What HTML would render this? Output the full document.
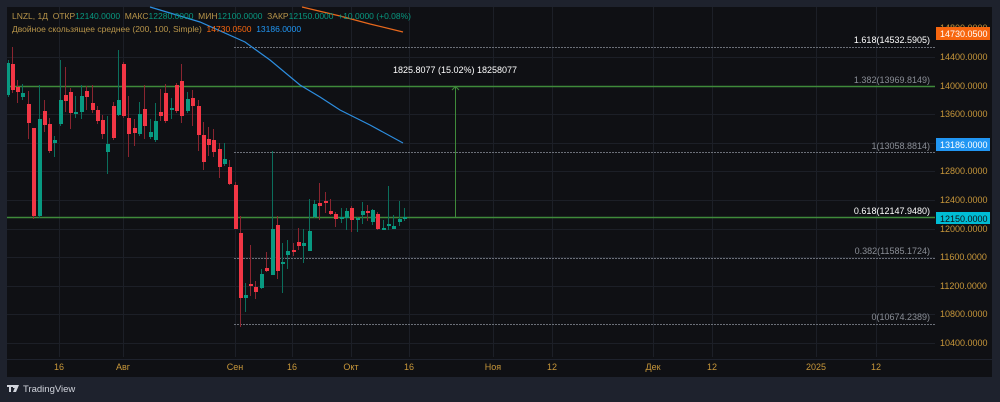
<!DOCTYPE html>
<html><head><meta charset="utf-8"><style>
html,body{margin:0;padding:0;background:#1e222d;width:1000px;height:402px;overflow:hidden}
svg{display:block}
text{font-family:"Liberation Sans",sans-serif}
</style></head><body>
<svg width="1000" height="402" viewBox="0 0 1000 402" xmlns="http://www.w3.org/2000/svg">
<rect x="0" y="0" width="1000" height="402" fill="#1e222d"/>
<rect x="7" y="7" width="985" height="370" fill="#0f1014"/>
<g stroke="#1c1f27" stroke-width="1">
<line x1="7" y1="57.5" x2="935" y2="57.5"/><line x1="7" y1="114.5" x2="935" y2="114.5"/>
<line x1="7" y1="171.5" x2="935" y2="171.5"/><line x1="7" y1="200.5" x2="935" y2="200.5"/>
<line x1="7" y1="229.5" x2="935" y2="229.5"/><line x1="7" y1="286.5" x2="935" y2="286.5"/>
<line x1="7" y1="314.5" x2="935" y2="314.5"/><line x1="7" y1="343.5" x2="935" y2="343.5"/>
<line x1="7" y1="143.5" x2="935" y2="143.5"/><line x1="7" y1="257.5" x2="935" y2="257.5"/>
<line x1="59.5" y1="7" x2="59.5" y2="357"/><line x1="123.5" y1="7" x2="123.5" y2="357"/>
<line x1="235.5" y1="7" x2="235.5" y2="357"/><line x1="292.5" y1="7" x2="292.5" y2="357"/>
<line x1="351.5" y1="7" x2="351.5" y2="357"/><line x1="409.5" y1="7" x2="409.5" y2="357"/>
<line x1="493.5" y1="7" x2="493.5" y2="357"/><line x1="552.5" y1="7" x2="552.5" y2="357"/>
<line x1="653.5" y1="7" x2="653.5" y2="357"/><line x1="712.5" y1="7" x2="712.5" y2="357"/>
<line x1="816.5" y1="7" x2="816.5" y2="357"/><line x1="876.5" y1="7" x2="876.5" y2="357"/>
</g>
<line x1="7" y1="359.5" x2="992" y2="359.5" stroke="#1e222d"/>
<g stroke="#6b6f78" stroke-width="1" stroke-dasharray="2,1">
<line x1="234" y1="47.5" x2="935" y2="47.5"/>
<line x1="234" y1="152.5" x2="935" y2="152.5"/>
<line x1="234" y1="258.5" x2="935" y2="258.5"/>
<line x1="234" y1="324.5" x2="935" y2="324.5"/>
</g>
<line x1="7" y1="86.5" x2="935" y2="86.5" stroke="#3f8a3a" stroke-width="1.5"/>
<line x1="7" y1="217.5" x2="935" y2="217.5" stroke="#3f8a3a" stroke-width="1.5"/>
<line x1="455.5" y1="87" x2="455.5" y2="217" stroke="#3f8a3a"/>
<path d="M452 90 L455.5 86.5 L459 90" stroke="#3f8a3a" fill="none"/>
<text x="455" y="73" fill="#fff" font-size="9" text-anchor="middle">1825.8077 (15.02%) 18258077</text>
<g font-size="9" text-anchor="end">
<text x="930" y="43" fill="#fff">1.618(14532.5905)</text>
<text x="930" y="83" fill="#8a8e96">1.382(13969.8149)</text>
<text x="930" y="149" fill="#8a8e96">1(13058.8814)</text>
<text x="930" y="214" fill="#fff">0.618(12147.9480)</text>
<text x="930" y="254" fill="#8a8e96">0.382(11585.1724)</text>
<text x="930" y="320" fill="#8a8e96">0(10674.2389)</text>
</g>
<polyline points="150,7 200,22 245,42 270,60 300,85 320,97 340,110 370,125 403,143" fill="none" stroke="#2d8ee0" stroke-width="1.2"/>
<polyline points="302,7 340,16 370,24 403,32" fill="none" stroke="#e8681c" stroke-width="1.2"/>
<g stroke-width="1">
<line x1="8.5" y1="60" x2="8.5" y2="97" stroke="#0b6e5c"/><rect x="7" y="63" width="3" height="32" fill="#089981"/>
<line x1="12.5" y1="47" x2="12.5" y2="93" stroke="#8a2530"/><rect x="11" y="64" width="4" height="26" fill="#f23645"/>
<line x1="17.5" y1="80" x2="17.5" y2="103" stroke="#8a2530"/><rect x="16" y="87" width="4" height="5" fill="#f23645"/>
<line x1="22.5" y1="84" x2="22.5" y2="100" stroke="#0b6e5c"/><rect x="21" y="93" width="4" height="4" fill="#089981"/>
<line x1="28.5" y1="91" x2="28.5" y2="139" stroke="#8a2530"/><rect x="27" y="104" width="4" height="19" fill="#f23645"/>
<line x1="33.5" y1="128" x2="33.5" y2="219" stroke="#8a2530"/><rect x="32" y="128" width="4" height="88" fill="#f23645"/>
<line x1="39.5" y1="85" x2="39.5" y2="218" stroke="#0b6e5c"/><rect x="38" y="119" width="4" height="97" fill="#089981"/>
<line x1="44.5" y1="100" x2="44.5" y2="132" stroke="#8a2530"/><rect x="43" y="111" width="4" height="14" fill="#f23645"/>
<line x1="49.5" y1="118" x2="49.5" y2="153" stroke="#8a2530"/><rect x="48" y="124" width="4" height="27" fill="#f23645"/>
<line x1="54.5" y1="136" x2="54.5" y2="157" stroke="#0b6e5c"/><rect x="53" y="140" width="4" height="3" fill="#089981"/>
<line x1="60.5" y1="60" x2="60.5" y2="126" stroke="#0b6e5c"/><rect x="59" y="100" width="4" height="24" fill="#089981"/>
<line x1="65.5" y1="67" x2="65.5" y2="112" stroke="#8a2530"/><rect x="64" y="95" width="4" height="6" fill="#f23645"/>
<line x1="70.5" y1="88" x2="70.5" y2="129" stroke="#8a2530"/><rect x="69" y="92" width="4" height="21" fill="#f23645"/>
<line x1="75.5" y1="96" x2="75.5" y2="118" stroke="#0b6e5c"/><rect x="74" y="112" width="4" height="2" fill="#089981"/>
<line x1="81.5" y1="85" x2="81.5" y2="119" stroke="#0b6e5c"/><rect x="80" y="96" width="4" height="16" fill="#089981"/>
<line x1="86.5" y1="86" x2="86.5" y2="110" stroke="#8a2530"/><rect x="85" y="91" width="4" height="6" fill="#f23645"/>
<line x1="92.5" y1="85" x2="92.5" y2="113" stroke="#8a2530"/><rect x="91" y="103" width="4" height="7" fill="#f23645"/>
<line x1="97.5" y1="106" x2="97.5" y2="124" stroke="#8a2530"/><rect x="96" y="110" width="4" height="11" fill="#f23645"/>
<line x1="102.5" y1="115" x2="102.5" y2="139" stroke="#8a2530"/><rect x="101" y="120" width="4" height="14" fill="#f23645"/>
<line x1="107.5" y1="116" x2="107.5" y2="174" stroke="#0b6e5c"/><rect x="106" y="144" width="4" height="8" fill="#089981"/>
<line x1="113.5" y1="102" x2="113.5" y2="140" stroke="#8a2530"/><rect x="112" y="106" width="4" height="32" fill="#f23645"/>
<line x1="118.5" y1="50" x2="118.5" y2="116" stroke="#0b6e5c"/><rect x="117" y="100" width="4" height="15" fill="#089981"/>
<line x1="123.5" y1="62" x2="123.5" y2="118" stroke="#8a2530"/><rect x="122" y="64" width="4" height="52" fill="#f23645"/>
<line x1="128.5" y1="96" x2="128.5" y2="157" stroke="#8a2530"/><rect x="127" y="118" width="4" height="16" fill="#f23645"/>
<line x1="134.5" y1="119" x2="134.5" y2="146" stroke="#8a2530"/><rect x="133" y="128" width="4" height="5" fill="#f23645"/>
<line x1="139.5" y1="102" x2="139.5" y2="136" stroke="#0b6e5c"/><rect x="138" y="114" width="4" height="20" fill="#089981"/>
<line x1="144.5" y1="85" x2="144.5" y2="139" stroke="#8a2530"/><rect x="143" y="109" width="4" height="17" fill="#f23645"/>
<line x1="150.5" y1="119" x2="150.5" y2="139" stroke="#0b6e5c"/><rect x="149" y="132" width="4" height="5" fill="#089981"/>
<line x1="155.5" y1="103" x2="155.5" y2="142" stroke="#0b6e5c"/><rect x="154" y="121" width="4" height="19" fill="#089981"/>
<line x1="160.5" y1="89" x2="160.5" y2="121" stroke="#8a2530"/><rect x="159" y="112" width="4" height="4" fill="#f23645"/>
<line x1="165.5" y1="84" x2="165.5" y2="123" stroke="#8a2530"/><rect x="164" y="93" width="4" height="28" fill="#f23645"/>
<line x1="171.5" y1="98" x2="171.5" y2="119" stroke="#0b6e5c"/><rect x="170" y="108" width="4" height="2" fill="#089981"/>
<line x1="176.5" y1="83" x2="176.5" y2="113" stroke="#8a2530"/><rect x="175" y="85" width="4" height="26" fill="#f23645"/>
<line x1="181.5" y1="64" x2="181.5" y2="123" stroke="#8a2530"/><rect x="180" y="81" width="4" height="35" fill="#f23645"/>
<line x1="187.5" y1="92" x2="187.5" y2="113" stroke="#0b6e5c"/><rect x="186" y="99" width="4" height="12" fill="#089981"/>
<line x1="192.5" y1="90" x2="192.5" y2="126" stroke="#8a2530"/><rect x="191" y="98" width="4" height="8" fill="#f23645"/>
<line x1="198.5" y1="100" x2="198.5" y2="151" stroke="#8a2530"/><rect x="197" y="106" width="4" height="29" fill="#f23645"/>
<line x1="203.5" y1="122" x2="203.5" y2="170" stroke="#8a2530"/><rect x="202" y="135" width="4" height="27" fill="#f23645"/>
<line x1="208.5" y1="127" x2="208.5" y2="156" stroke="#8a2530"/><rect x="207" y="139" width="4" height="6" fill="#f23645"/>
<line x1="213.5" y1="129" x2="213.5" y2="157" stroke="#8a2530"/><rect x="212" y="140" width="4" height="12" fill="#f23645"/>
<line x1="219.5" y1="143" x2="219.5" y2="178" stroke="#8a2530"/><rect x="218" y="149" width="4" height="18" fill="#f23645"/>
<line x1="224.5" y1="143" x2="224.5" y2="166" stroke="#0b6e5c"/><rect x="223" y="159" width="4" height="5" fill="#089981"/>
<line x1="229.5" y1="160" x2="229.5" y2="185" stroke="#8a2530"/><rect x="228" y="167" width="4" height="17" fill="#f23645"/>
<line x1="235.5" y1="182" x2="235.5" y2="229" stroke="#8a2530"/><rect x="234" y="185" width="4" height="44" fill="#f23645"/>
<line x1="240.5" y1="216" x2="240.5" y2="327" stroke="#8a2530"/><rect x="239" y="233" width="4" height="65" fill="#f23645"/>
<line x1="245.5" y1="283" x2="245.5" y2="312" stroke="#0b6e5c"/><rect x="244" y="295" width="4" height="3" fill="#089981"/>
<line x1="250.5" y1="245" x2="250.5" y2="296" stroke="#8a2530"/><rect x="249" y="284" width="4" height="2" fill="#f23645"/>
<line x1="255.5" y1="281" x2="255.5" y2="299" stroke="#8a2530"/><rect x="254" y="287" width="4" height="5" fill="#f23645"/>
<line x1="261.5" y1="269" x2="261.5" y2="289" stroke="#0b6e5c"/><rect x="260" y="274" width="4" height="14" fill="#089981"/>
<line x1="266.5" y1="252" x2="266.5" y2="272" stroke="#8a2530"/><rect x="265" y="268" width="4" height="3" fill="#f23645"/>
<line x1="272.5" y1="151" x2="272.5" y2="275" stroke="#0b6e5c"/><rect x="271" y="229" width="4" height="46" fill="#089981"/>
<line x1="277.5" y1="216" x2="277.5" y2="279" stroke="#8a2530"/><rect x="276" y="225" width="4" height="46" fill="#f23645"/>
<line x1="282.5" y1="243" x2="282.5" y2="293" stroke="#0b6e5c"/><rect x="281" y="262" width="4" height="2" fill="#089981"/>
<line x1="287.5" y1="240" x2="287.5" y2="269" stroke="#0b6e5c"/><rect x="286" y="251" width="4" height="4" fill="#089981"/>
<line x1="293.5" y1="243" x2="293.5" y2="256" stroke="#8a2530"/><rect x="292" y="250" width="4" height="2" fill="#f23645"/>
<line x1="298.5" y1="228" x2="298.5" y2="250" stroke="#8a2530"/><rect x="297" y="242" width="4" height="4" fill="#f23645"/>
<line x1="303.5" y1="229" x2="303.5" y2="263" stroke="#0b6e5c"/><rect x="302" y="243" width="4" height="3" fill="#089981"/>
<line x1="309.5" y1="199" x2="309.5" y2="251" stroke="#0b6e5c"/><rect x="308" y="231" width="4" height="20" fill="#089981"/>
<line x1="314.5" y1="200" x2="314.5" y2="218" stroke="#0b6e5c"/><rect x="313" y="204" width="4" height="13" fill="#089981"/>
<line x1="319.5" y1="183" x2="319.5" y2="220" stroke="#8a2530"/><rect x="318" y="203" width="4" height="3" fill="#f23645"/>
<line x1="325.5" y1="192" x2="325.5" y2="213" stroke="#8a2530"/><rect x="324" y="201" width="4" height="2" fill="#f23645"/>
<line x1="330.5" y1="199" x2="330.5" y2="215" stroke="#8a2530"/><rect x="329" y="211" width="4" height="3" fill="#f23645"/>
<line x1="335.5" y1="212" x2="335.5" y2="227" stroke="#8a2530"/><rect x="334" y="214" width="4" height="5" fill="#f23645"/>
<line x1="341.5" y1="208" x2="341.5" y2="223" stroke="#0b6e5c"/><rect x="340" y="217" width="4" height="2" fill="#089981"/>
<line x1="346.5" y1="208" x2="346.5" y2="230" stroke="#0b6e5c"/><rect x="345" y="211" width="4" height="7" fill="#089981"/>
<line x1="351.5" y1="206" x2="351.5" y2="232" stroke="#8a2530"/><rect x="350" y="208" width="4" height="12" fill="#f23645"/>
<line x1="357.5" y1="217" x2="357.5" y2="232" stroke="#0b6e5c"/><rect x="356" y="218" width="4" height="2" fill="#089981"/>
<line x1="362.5" y1="202" x2="362.5" y2="224" stroke="#0b6e5c"/><rect x="361" y="211" width="4" height="4" fill="#089981"/>
<line x1="367.5" y1="205" x2="367.5" y2="221" stroke="#8a2530"/><rect x="366" y="211" width="4" height="2" fill="#f23645"/>
<line x1="372.5" y1="209" x2="372.5" y2="225" stroke="#0b6e5c"/><rect x="371" y="210" width="4" height="12" fill="#089981"/>
<line x1="377.5" y1="212" x2="377.5" y2="230" stroke="#8a2530"/><rect x="376" y="214" width="4" height="15" fill="#f23645"/>
<line x1="383.5" y1="220" x2="383.5" y2="230" stroke="#0b6e5c"/><rect x="382" y="228" width="4" height="2" fill="#089981"/>
<line x1="388.5" y1="186" x2="388.5" y2="230" stroke="#0b6e5c"/><rect x="387" y="224" width="4" height="2" fill="#089981"/>
<line x1="393.5" y1="215" x2="393.5" y2="229" stroke="#0b6e5c"/><rect x="392" y="226" width="4" height="3" fill="#089981"/>
<line x1="399.5" y1="201" x2="399.5" y2="226" stroke="#0b6e5c"/><rect x="398" y="219" width="4" height="3" fill="#089981"/>
<line x1="404.5" y1="208" x2="404.5" y2="221" stroke="#0b6e5c"/><rect x="403" y="217" width="4" height="2" fill="#089981"/>
</g>
<g font-size="9" fill="#c8973a">
<text x="940" y="31">14800.0000</text>
<text x="940" y="60">14400.0000</text>
<text x="940" y="89">14000.0000</text>
<text x="940" y="117">13600.0000</text>
<text x="940" y="174">12800.0000</text>
<text x="940" y="203">12400.0000</text>
<text x="940" y="232">12000.0000</text>
<text x="940" y="260">11600.0000</text>
<text x="940" y="289">11200.0000</text>
<text x="940" y="317">10800.0000</text>
<text x="940" y="346">10400.0000</text>
</g>
<rect x="936" y="27" width="54" height="13" fill="#f7660f"/>
<text x="940" y="37" font-size="9" fill="#fff">14730.0500</text>
<rect x="936" y="138" width="54" height="13" fill="#2196f3"/>
<text x="940" y="148" font-size="9" fill="#fff">13186.0000</text>
<rect x="936" y="212" width="54" height="12" fill="#00bcd4"/>
<text x="940" y="222" font-size="9" fill="#0f1014">12150.0000</text>
<g font-size="9" fill="#c8973a" text-anchor="middle">
<text x="59" y="370">16</text><text x="123" y="370">Авг</text><text x="235" y="370">Сен</text>
<text x="292" y="370">16</text><text x="351" y="370">Окт</text><text x="409" y="370">16</text>
<text x="493" y="370">Ноя</text><text x="552" y="370">12</text><text x="653" y="370">Дек</text>
<text x="712" y="370">12</text><text x="816" y="370">2025</text><text x="876" y="370">12</text>
</g>
<text x="12" y="19" font-size="8.5" xml:space="preserve"><tspan fill="#b8954a">LNZL, 1Д  ОТКР</tspan><tspan fill="#089981">12140.0000</tspan><tspan fill="#b8954a">  МАКС</tspan><tspan fill="#089981">12280.0000</tspan><tspan fill="#b8954a">  МИН</tspan><tspan fill="#089981">12100.0000</tspan><tspan fill="#b8954a">  ЗАКР</tspan><tspan fill="#089981">12150.0000  +10.0000 (+0.08%)</tspan></text>
<text x="12" y="32" font-size="8.5" xml:space="preserve"><tspan fill="#b8954a">Двойное скользящее среднее (200, 100, Simple)  </tspan><tspan fill="#f7660f">14730.0500</tspan><tspan fill="#2196f3">  13186.0000</tspan></text>
<g fill="#d1d4dc">
<rect x="7" y="385" width="6" height="2"/><rect x="9" y="385" width="2" height="7"/>
<rect x="13" y="385" width="3" height="3"/><path d="M16 385 L19 385 L16 392 L13 392 Z"/>
</g>
<text x="23" y="392" font-size="9.5" fill="#d1d4dc">TradingView</text>
</svg>
</body></html>
